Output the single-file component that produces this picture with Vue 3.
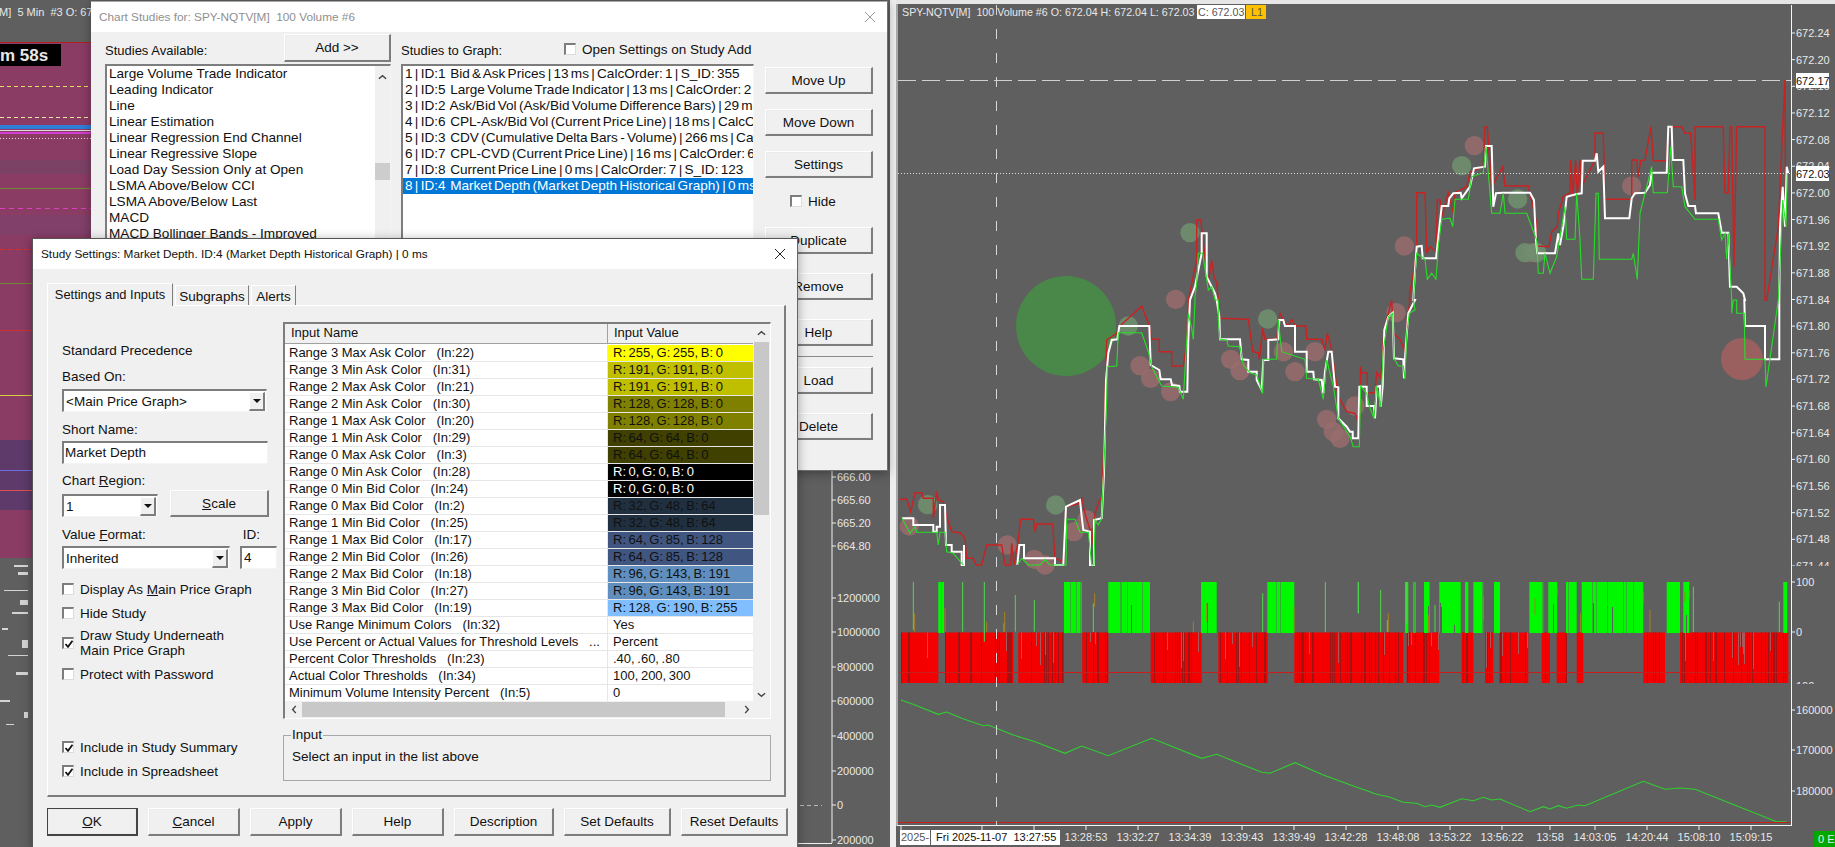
<script setup>
const map = (ox, oy, a) => { const r = []; for (let i = 0; i < a.length; i += 2) r.push([ox + a[i] / 3, oy + a[i + 1] / 3]); return r }
const Z7 = a => map(890, 0, a), Z8 = a => map(1350, 0, a), Z9 = a => map(890, 300, a), Z10 = a => map(1350, 300, a), Z11 = a => map(890, 560, a), Z12 = a => map(1350, 560, a)
const str = p => p.map(q => q[0].toFixed(1) + ',' + q[1].toFixed(1)).join(' ')

const white = [
  ...Z9([36,655,70,655,70,675,130,675,130,695,140,695,140,680,150,680,150,615,165,615,168,735,185,735,185,755,215,755,215,795,222,795,222,735]),
]
const white2 = [
  ...Z9([382,795,388,735,402,735,402,775,495,775,495,795,520,795,528,620,570,600,575,650,580,690,600,695,600,795,612,795,612,660,635,655,642,520,648,240,655,160,665,120,682,118,688,78,778,78,782,195,808,210,812,238,842,238,846,255,868,258,870,275,892,275,895,120,900,0]),
  ...Z7([915,860,935,760,935,700,950,700,950,830,965,860,975,880,980,900]),
  ...Z9([980,0,988,50,990,118,1050,118,1055,178,1075,180,1075,215,1100,215,1100,240,1115,270,1120,180,1135,180,1135,120,1165,118,1168,60,1180,60,1185,78,1215,78,1215,155,1250,155,1250,215,1270,215,1272,238,1295,240,1300,280,1305,215,1315,155,1325,155,1335,260,1345,262,1345,355,1370,380,1380,395]),
  ...Z10([0,395,8,395,8,415,25,415,28,260,50,260,50,318,72,318,75,355,80,260,90,258,92,320,98,258,103,90,115,50,128,38,132,175,160,178,162,235,166,160,175,40,195,0]),
  ...Z8([190,900,195,810,200,740,215,738,218,775,258,775,262,740,275,618,295,618,298,595,310,580,332,578,335,595,360,560,372,505,405,500,408,438,425,438,430,620,438,580,458,578,540,578,552,600,558,720,562,760,615,760,625,700,630,735,640,680,650,590,680,582,695,580,698,482,735,482,740,460,745,515,760,500,765,655,838,655,845,595,855,580,885,578,900,555,905,518,950,518,955,380,965,380,968,480,1000,480,1005,580,1015,618,1035,618,1038,640,1105,640,1115,698,1135,698,1140,860,1160,860,1180,880,1185,900]),
  ...Z10([1183,0,1185,78,1245,78,1245,178,1288,178,1288,0]),
  ...Z8([1288,900,1290,680,1298,560,1305,680,1310,500,1315,520]),
]
const red = [
  ...Z9([30,598,50,598,62,635,75,578,95,578,100,595,130,595,130,655,140,575,145,600,160,605,170,650,185,695,210,698,225,715,230,775,250,775,258,795,275,795,290,735,335,735,345,795,362,795,365,730,372,795,385,720,392,658,430,658,435,695,440,672,488,672,495,775,520,785,528,620,565,612,575,595,585,640,600,690,605,735,615,640,625,610,635,590,640,480,645,300,650,120,680,100,690,78,755,18,778,78,785,118,808,118,808,155,845,155,845,198,880,198,890,130,895,0]),
  ...Z7([895,900,920,780,920,660,932,660,945,770,955,850,965,780,972,830,980,850,985,900]),
  ...Z9([978,0,985,25,990,55,1075,58,1088,155,1105,158,1108,178,1118,85,1125,118,1160,118,1170,40,1185,70,1195,78,1205,58,1215,78,1248,78,1250,118,1295,118,1305,150,1312,100,1325,150,1345,290,1370,335,1395,340,1408,375,1412,200,1415,218,1432,218]),
  ...Z10([52,218,52,278,75,278,80,218,92,235,102,90,125,0]),
  ...Z10([130,100,150,118,165,155,172,60,180,0]),
  ...Z8([178,900,180,875,200,760,200,578,225,578,230,760,240,740,258,755,262,600,270,600,275,650,295,578,310,640,315,578,350,560,360,518,400,498,405,380,412,380,425,560,458,500,465,558,535,558,558,660,562,738,597,740,605,695,622,680,625,640,640,590,660,578,662,480,668,590,677,480,682,590,690,480,695,560,735,480,735,400,760,400,765,598,845,598,845,480,860,480,865,530,872,482,885,480,903,380,910,482,950,482,955,380,995,380,1005,400,1022,400,1035,600,1035,380,1120,380,1122,480,1125,578,1135,578,1140,380,1145,380,1152,800,1160,380,1245,380,1245,900,1250,900,1285,680,1298,380,1305,240,1307,680]),
]
const green = [
  ...Z9([36,655,60,700,75,680,80,697,140,697,145,735,150,697,165,697,170,755,190,760,220,795]),
]
const green2 = [
  ...Z9([382,795,395,775,415,795,450,795,465,778,480,795,528,795,530,658,555,658,570,697,595,697,605,795,612,795,615,660,625,675,635,655,650,300,652,200,680,198,685,98,755,98,775,155,785,200,815,258,865,262,880,298,890,120,895,40,905,85,910,118,915,0]),
  ...Z7([915,890,920,850,925,760,938,760,955,870,965,860,975,900]),
  ...Z9([985,0,985,60,990,118,1010,120,1015,138,1050,140,1060,195,1080,218,1100,225,1118,280,1120,178,1160,178,1165,60,1175,155,1245,178,1250,235,1285,238,1300,298,1310,180,1330,258,1345,355,1380,410,1390,440,1408,440,1412,258,1430,280,1438,320]),
  ...Z10([58,318,72,355,80,258,92,320,100,150,115,50,128,40,132,175,145,198,160,198,165,238,170,100,178,40,195,30]),
  ...Z8([190,900,200,760,225,778,232,838,245,820,258,838,265,740,275,658,300,655,308,680,315,598,355,598,365,530,400,518,408,438,425,640,450,640,460,580,465,640,530,640,560,720,565,820,580,820,585,760,600,820,620,770,645,620,650,718,675,718,680,580,690,718,695,838,730,838,738,580,745,580,748,778,845,778,850,760,862,838,870,640,905,500,910,578,952,578,962,440,970,560,995,560,1005,620,1035,658,1105,658,1115,720,1125,700,1130,778,1135,700,1145,900]),
  ...Z10([1145,0,1145,40,1150,0,1160,0,1160,40,1183,40,1185,178,1245,178,1248,260,1285,0]),
  ...Z8([1285,900,1295,680,1298,600,1308,680,1312,520]),
]
const priceLines = [
  { c: '#c92222', w: 1.4, p: str(red) },
  { c: '#ffffff', w: 2, p: str(white) },
  { c: '#ffffff', w: 2, p: str(white2) },
  { c: '#26e026', w: 1.1, p: str(green) },
  { c: '#26e026', w: 1.1, p: str(green2) },
]
const redDots = [
  ...Z9([58,678,352,735,433,778,465,795,552,695,590,660,750,197,782,235,842,275,1022,178,1050,212,1180,155,1215,215,1275,155,1310,358,1330,395,1350,415,1395,318]),
  ...Z7([857,898]),
  ...Z8([373,437,845,558,163,738,548,758]),
  ...Z10([138,38]),
]
const greenDots = [
  ...Z9([113,614,497,615,715,78,1133,57]),
  ...Z7([900,698]),
  ...Z8([335,497,503,597,525,758,560,758]),
]

let seed = 4711
const rnd = () => (seed = (seed * 16807) % 2147483647) / 2147483647
const zones = (arr, ox) => arr.map(z => [ox + z[0] / 3, ox + z[1] / 3])
const redZones = [
  ...zones([[33,145],[165,370],[385,522],[577,655],[782,935],[985,1133],[1213,1440]], 890),
  ...zones([[60,160],[170,225],[225,268],[335,370],[405,430],[448,535],[575,600],[620,650],[680,700],[880,945],[990,1285],[1285,1315]], 1350),
]
const greenZones = [
  ...zones([[145,162],[522,575],[655,780],[933,980],[1132,1213]], 890),
  ...zones([[165,175],[190,197],[222,238],[268,332],[345,355],[370,400],[432,450],[538,580],[595,622],[648,680],[695,880],[950,990],[1000,1018],[1300,1312]], 1350),
]
let rDark = '', rGap = '', rFill = ''
for (const [a, b] of redZones) {
  rFill += `M${a.toFixed(1)} 632.5H${b.toFixed(1)}V683H${a.toFixed(1)}Z`
  for (let x = Math.ceil(a); x < b; x++) {
    const r = rnd()
    if (r < 0.2) rDark += `M${x + 0.5} 632.5V683`
    else if (r < 0.25) rGap += `M${x + 0.5} 632.5V${(640 + rnd() * 30).toFixed(0)}`
  }
}
let gDark = '', gGap = '', gFill = ''
for (const [a, b] of greenZones) {
  gFill += `M${a.toFixed(1)} 582H${b.toFixed(1)}V633H${a.toFixed(1)}Z`
  for (let x = Math.ceil(a); x < b; x++) {
    const r = rnd()
    if (r < 0.1) gDark += `M${x + 0.5} 582V633`
    else if (r < 0.14) gGap += `M${x + 0.5} 633V${(600 + rnd() * 28).toFixed(0)}`
  }
}
const strayGreen = [
  ...[[70,66,210],[218,66,215],[283,66,245],[376,105,215],[433,120,215],[342,190,215],[610,130,216],[1118,100,216],[1306,66,216],[1405,66,160]].map(s => [890 + s[0] / 3, 560 + s[1] / 3, 560 + s[2] / 3]),
  ...[[25,66,160],[92,90,216],[112,180,216],[170,66,190],[255,135,216],[1030,80,216],[1288,125,216]].map(s => [1350 + s[0] / 3, 560 + s[1] / 3, 560 + s[2] / 3]),
]
const strayRed = [
  ...[[74,160,216],[165,145,216],[290,185,216],[344,155,216],[614,100,140],[910,185,216],[950,130,185],[1212,140,216]].map(s => [890 + s[0] / 3, 560 + s[1] / 3, 560 + s[2] / 3]),
  ...[[115,160,216],[235,165,216],[400,110,180],[555,115,165],[622,85,105],[692,160,216],[880,95,130],[900,150,216],[1005,95,125],[1018,90,115]].map(s => [1350 + s[0] / 3, 560 + s[1] / 3, 560 + s[2] / 3]),
]
const cvd = str([
  ...Z11([33,420,75,435,145,463,170,456,215,475,280,497,295,495,370,525,435,545,525,580,575,558,655,587,785,535,935,595,980,583,1115,637,1140,640,1215,608,1300,645,1400,682,1440,695]),
  ...Z12([70,700,90,705,115,710,160,727,200,730,225,740,245,735,270,742,335,716,370,722,400,712,425,720,450,717,540,755,580,740,600,747,625,737,650,745,685,735,705,737,880,664,945,688,990,684,1035,688,1280,785,1310,785]),
])

const priceLabels = ['672.24','672.20','672.16','672.12','672.08','672.04','672.00','671.96','671.92','671.88','671.84','671.80','671.76','671.72','671.68','671.64','671.60','671.56','671.52','671.48','671.44']
  .map((t, i) => ({ t, y: 33 + i * 26.65 }))
const otherLabels = [
  { t: '100', y: 582 }, { t: '0', y: 632 }, { t: '100', y: 686 },
  { t: '160000', y: 710 }, { t: '170000', y: 750 }, { t: '180000', y: 791 },
]
const times = [[1086,'13:28:53'],[1138,'13:32:27'],[1190,'13:34:39'],[1242,'13:39:43'],[1294,'13:39:49'],[1346,'13:42:28'],[1398,'13:48:08'],[1450,'13:53:22'],[1502,'13:56:22'],[1550,'13:58'],[1595,'14:03:05'],[1647,'14:20:44'],[1699,'15:08:10'],[1751,'15:09:15']]
const timeTicks = [901, 982, 1034, 1086, 1138, 1190, 1242, 1294, 1346, 1398, 1450, 1502, 1550, 1595, 1647, 1699, 1751]

const bgLabels = [['666.00',477],['665.60',500],['665.20',523],['664.80',546],['1200000',598],['1000000',632],['800000',667],['600000',701],['400000',736],['200000',771],['0',805],['200000',840]]
const stripMarks = [[14,565,14,2],[18,572,10,3],[4,590,24,1],[20,600,8,5],[12,612,16,2],[2,628,6,2],[22,640,6,8],[8,655,20,1],[16,672,12,3],[0,700,10,2],[24,712,4,6],[6,724,8,1]]

const studiesTitle = 'Chart Studies for: SPY-NQTV[M]  100 Volume #6'
const chartHeader = 'SPY-NQTV[M]  100 Volume #6 O: 672.04 H: 672.04 L: 672.03'
const backHeader = '[M]  5 Min  #3 O: 672.03'
const cursorDate = 'Fri 2025-11-07  13:27:55'

const availableStudies = ['Large Volume Trade Indicator','Leading Indicator','Line','Linear Estimation','Linear Regression End Channel','Linear Regressive Slope','Load Day Session Only at Open','LSMA Above/Below CCI','LSMA Above/Below Last','MACD','MACD Bollinger Bands - Improved']
const graphStudies = [
  '1 | ID:1  Bid & Ask Prices | 13 ms | CalcOrder: 1 | S_ID: 355',
  '2 | ID:5  Large Volume Trade Indicator | 13 ms | CalcOrder: 2 | S_ID: 310',
  '3 | ID:2  Ask/Bid Vol (Ask/Bid Volume Difference Bars) | 29 ms | CalcOrder: 3',
  '4 | ID:6  CPL-Ask/Bid Vol (Current Price Line) | 18 ms | CalcOrder: 4 | S_ID: 123',
  '5 | ID:3  CDV (Cumulative Delta Bars - Volume) | 266 ms | CalcOrder: 5',
  '6 | ID:7  CPL-CVD (Current Price Line) | 16 ms | CalcOrder: 6 | S_ID: 123',
  '7 | ID:8  Current Price Line | 0 ms | CalcOrder: 7 | S_ID: 123',
  '8 | ID:4  Market Depth (Market Depth Historical Graph) | 0 ms | CalcOrder: 8',
]
const inputRows = [
  ['Range 3 Max Ask Color   (In:22)', 255, 255, 0],
  ['Range 3 Min Ask Color   (In:31)', 191, 191, 0],
  ['Range 2 Max Ask Color   (In:21)', 191, 191, 0],
  ['Range 2 Min Ask Color   (In:30)', 128, 128, 0],
  ['Range 1 Max Ask Color   (In:20)', 128, 128, 0],
  ['Range 1 Min Ask Color   (In:29)', 64, 64, 0],
  ['Range 0 Max Ask Color   (In:3)', 64, 64, 0],
  ['Range 0 Min Ask Color   (In:28)', 0, 0, 0],
  ['Range 0 Min Bid Color   (In:24)', 0, 0, 0],
  ['Range 0 Max Bid Color   (In:2)', 32, 48, 64],
  ['Range 1 Min Bid Color   (In:25)', 32, 48, 64],
  ['Range 1 Max Bid Color   (In:17)', 64, 85, 128],
  ['Range 2 Min Bid Color   (In:26)', 64, 85, 128],
  ['Range 2 Max Bid Color   (In:18)', 96, 143, 191],
  ['Range 3 Min Bid Color   (In:27)', 96, 143, 191],
  ['Range 3 Max Bid Color   (In:19)', 128, 190, 255],
].map(r => ({
  name: r[0],
  value: `R: ${r[1]}, G: ${r[2]}, B: ${r[3]}`,
  bg: `rgb(${r[1]},${r[2]},${r[3]})`,
  fg: r[1] === 0 && r[2] === 0 ? '#fff' : '#111',
}))
const textRows = [
  ['Use Range Minimum Colors   (In:32)', 'Yes'],
  ['Use Percent or Actual Values for Threshold Levels   ...', 'Percent'],
  ['Percent Color Thresholds   (In:23)', '.40, .60, .80'],
  ['Actual Color Thresholds   (In:34)', '100, 200, 300'],
  ['Minimum Volume Intensity Percent   (In:5)', '0'],
]
</script>

<template>
  <div class="desktop">
    <!-- Chart behind the dialogs -->
    <svg class="back-chart" viewBox="0 0 895 847" width="895" height="847">
      <rect x="0" y="0" width="895" height="847" fill="#5f5f5f" />
      <rect x="0" y="43" width="91" height="515" fill="#8a3c64" />
      <rect x="0" y="160" width="91" height="14" fill="#7c4266" />
      <rect x="0" y="215" width="91" height="20" fill="#80406a" />
      <rect x="0" y="440" width="32" height="70" fill="#5d3a6a" />
      <rect v-for="(m, i) in stripMarks" :key="i" :x="m[0]" :y="m[1]" :width="m[2]" :height="m[3]" fill="#d4d4d4" />
      <line x1="0" y1="42.5" x2="91" y2="42.5" stroke="#b02020" />
      <line x1="0" y1="86.5" x2="91" y2="86.5" stroke="#dde060" stroke-dasharray="4 3" />
      <line x1="0" y1="117.5" x2="91" y2="117.5" stroke="#e8e8a0" stroke-dasharray="4 3" />
      <rect x="0" y="125" width="91" height="4" fill="#2f7ed8" />
      <line x1="0" y1="130.5" x2="91" y2="130.5" stroke="#dddddd" />
      <rect x="0" y="132" width="91" height="2" fill="#d23fd2" />
      <line x1="0" y1="138.5" x2="91" y2="138.5" stroke="#dddddd" stroke-dasharray="1 2" />
      <line x1="0" y1="188.5" x2="91" y2="188.5" stroke="#6f8a33" />
      <line x1="0" y1="208.5" x2="91" y2="208.5" stroke="#dc3fc0" stroke-dasharray="5 4" />
      <line x1="0" y1="249.5" x2="32" y2="249.5" stroke="#d03030" stroke-dasharray="5 3" />
      <line x1="0" y1="283.5" x2="32" y2="283.5" stroke="#6f8a33" />
      <line x1="0" y1="330.5" x2="32" y2="330.5" stroke="#d03030" />
      <line x1="0" y1="395.5" x2="32" y2="395.5" stroke="#d8d040" />
      <line x1="0" y1="470.5" x2="32" y2="470.5" stroke="#6e6ee0" />
      <line x1="0" y1="490.5" x2="32" y2="490.5" stroke="#e05050" />
      <rect class="time-box" x="0" y="44" width="61" height="22" fill="#000" />
      <text class="big" x="0" y="61">m 58s</text>
      <text class="lbl" x="-4" y="16">{{ backHeader }}</text>
      <line x1="832" y1="470" x2="832" y2="843" stroke="#f0f0f0" />
      <line x1="798" y1="843.5" x2="832" y2="843.5" stroke="#f0f0f0" />
      <line x1="800" y1="805.5" x2="822" y2="805.5" stroke="#bbb" stroke-dasharray="4 3" />
      <g v-for="b in bgLabels" :key="b[0] + b[1]">
        <line x1="832" :y1="b[1]" x2="836" :y2="b[1]" stroke="#f0f0f0" />
        <text class="lbl" x="837" :y="b[1] + 4">{{ b[0] }}</text>
      </g>
    </svg>

    <!-- Chart on the right -->
    <section class="chart">
      <svg viewBox="890 0 945 847" width="945" height="847">
        <rect x="890" y="0" width="945" height="847" fill="#5f5f5f" />
        <rect x="890" y="0" width="945" height="4" fill="#e6e6e6" />
        <rect x="890" y="0" width="6" height="847" fill="#eeeeee" />
        <line x1="897" y1="4" x2="897" y2="826" stroke="#f5f5f5" />
        <g v-for="(d, i) in redDots" :key="'r' + i"><circle :cx="d[0]" :cy="d[1]" r="9.7" fill="#976c6c" opacity=".88" /></g>
        <g v-for="(d, i) in greenDots" :key="'g' + i"><circle :cx="d[0]" :cy="d[1]" r="9.7" fill="#6f8f6f" opacity=".9" /></g>
        <circle cx="1066" cy="326" r="50" fill="#4a884a" />
        <circle cx="1742" cy="359" r="21" fill="#9a6060" />
        <polyline v-for="(l, i) in priceLines" :key="i" :points="l.p" fill="none" :stroke="l.c" :stroke-width="l.w" />
        <path :d="rFill" fill="#f40000" />
        <path :d="rGap" stroke="#a85a5a" fill="none" />
        <path :d="rDark" stroke="#9c1414" fill="none" />
        <path :d="gFill" fill="#00f800" />
        <path :d="gGap" stroke="#5f5f5f" fill="none" />
        <path :d="gDark" stroke="#33b033" fill="none" />
        <line v-for="(s, i) in strayGreen" :key="'sg' + i" :x1="s[0]" :y1="s[1]" :x2="s[0]" :y2="s[2]" stroke="#4ed84e" />
        <line v-for="(s, i) in strayRed" :key="'sr' + i" :x1="s[0]" :y1="s[1]" :x2="s[0]" :y2="s[2]" stroke="#a88020" />
        <line x1="899" y1="672.5" x2="1790" y2="672.5" stroke="#c81e1e" />
        <polyline :points="cvd" fill="none" stroke="#2fd02f" stroke-width="1.1" />
        <line x1="898" y1="822.5" x2="1790" y2="822.5" stroke="#c81e1e" />
        <line x1="996.5" y1="5" x2="996.5" y2="826" stroke="#d8d8d8" stroke-dasharray="10 14" />
        <line x1="898" y1="80.5" x2="1791" y2="80.5" stroke="#d0d0d0" stroke-dasharray="18 6" />
        <line x1="898" y1="173.5" x2="1791" y2="173.5" stroke="#dddddd" stroke-dasharray="1 2" />

        <line x1="1791.5" y1="5" x2="1791.5" y2="826" stroke="#f5f5f5" />
        <line x1="897" y1="825.5" x2="1791" y2="825.5" stroke="#f5f5f5" />
        <g v-for="l in priceLabels" :key="l.t">
          <line x1="1791" :y1="l.y" x2="1795" :y2="l.y" stroke="#f0f0f0" />
          <text class="lbl" x="1796" :y="l.y + 4">{{ l.t }}</text>
        </g>
        <g v-for="l in otherLabels" :key="l.t + l.y">
          <line x1="1791" :y1="l.y" x2="1795" :y2="l.y" stroke="#f0f0f0" />
          <text class="lbl" x="1796" :y="l.y + 4">{{ l.t }}</text>
        </g>
        <rect x="1792" y="566" width="43" height="9" fill="#5f5f5f" />
        <rect x="1792" y="684" width="43" height="12" fill="#5f5f5f" />
        <rect x="1796" y="73" width="33" height="15" fill="#fff" />
        <text class="lbl dark" x="1796" y="85">672.17</text>
        <rect x="1796" y="166" width="33" height="15" fill="#fff" />
        <text class="lbl dark" x="1796" y="178">672.03</text>

        <text class="lbl head-text" x="902" y="16">{{ chartHeader }}</text>
        <rect x="1197" y="5" width="48" height="14" fill="#fff" />
        <text class="lbl gray head-text" x="1198" y="16">C: 672.03</text>
        <rect x="1246" y="5" width="20" height="14" fill="#ffc000" />
        <text class="lbl gray head-text" x="1251" y="16">L1</text>

        <line v-for="t in timeTicks" :key="t" :x1="t" y1="826" :x2="t" y2="830" stroke="#f0f0f0" />
        <rect x="900" y="830" width="30" height="15" fill="#fff" />
        <text class="lbl gray" x="901" y="841">2025-</text>
        <rect x="931" y="830" width="129" height="15" fill="#fff" />
        <text class="lbl dark" x="936" y="841">{{ cursorDate }}</text>
        <text v-for="t in times" :key="t[1]" class="lbl" :x="t[0]" y="841" text-anchor="middle">{{ t[1] }}</text>
        <rect x="1814" y="831" width="21" height="16" fill="#00a800" />
        <text class="lbl" x="1818" y="843">0 E</text>
      </svg>
    </section>

    <!-- Chart Studies dialog -->
    <section class="dialog studies">
      <header class="title inactive">
        <span>{{ studiesTitle }}</span>
        <svg class="close" viewBox="0 0 12 12" width="12" height="12"><path d="M1 1L11 11M11 1L1 11" stroke="#9a9a9a" fill="none" /></svg>
      </header>
      <div class="studies-body">
        <div class="col-avail">
          <div class="head">
            <span>Studies Available:</span>
            <button class="btn add">Add &gt;&gt;</button>
          </div>
          <div class="list sunken">
            <div class="list-rows">
              <div v-for="s in availableStudies" :key="s" class="row">{{ s }}</div>
            </div>
            <div class="vbar">
              <svg viewBox="0 0 10 6" width="9" height="6" class="chev"><path d="M1 5L5 1.5L9 5" stroke="#444" stroke-width="1.6" fill="none" /></svg>
              <div class="vthumb"></div>
            </div>
          </div>
        </div>
        <div class="col-graph">
          <div class="head">
            <span class="graph-label">Studies to Graph:</span>
            <label class="check"><i class="box"></i><span>Open Settings on Study Add</span></label>
          </div>
          <div class="list sunken">
            <div class="list-rows graph-rows">
              <div v-for="(s, i) in graphStudies" :key="s" class="row" :class="{ sel: i === 7 }">{{ s }}</div>
            </div>
          </div>
        </div>
        <div class="col-actions">
          <button class="btn act">Move Up</button>
          <button class="btn act m15">Move Down</button>
          <button class="btn act m15">Settings</button>
          <label class="check hide"><i class="box"></i><span>Hide</span></label>
          <button class="btn act m17">Duplicate</button>
          <button class="btn act m19">Remove</button>
          <button class="btn act m19">Help</button>
          <div class="sep"></div>
          <button class="btn act m10">Load</button>
          <button class="btn act m19">Delete</button>
        </div>
      </div>
    </section>

    <!-- Study Settings dialog -->
    <section class="dialog settings">
      <header class="title">
        <span>Study Settings: Market Depth. ID:4 (Market Depth Historical Graph) | 0 ms</span>
        <svg class="close" viewBox="0 0 12 12" width="12" height="12"><path d="M1 1L11 11M11 1L1 11" stroke="#222" fill="none" /></svg>
      </header>
      <div class="settings-body">
        <nav class="tabs">
          <div class="tab active">Settings and Inputs</div>
          <div class="tab t-sub">Subgraphs</div>
          <div class="tab t-alert">Alerts</div>
        </nav>
        <div class="pane">
          <div class="form">
            <div class="lab">Standard Precedence</div>
            <div class="lab m10">Based On:</div>
            <div class="combo sunken m4"><span>&lt;Main Price Graph&gt;</span><i class="arrow"></i></div>
            <div class="lab m10">Short Name:</div>
            <div class="field sunken m3">Market Depth</div>
            <div class="lab m9">Chart <u>R</u>egion:</div>
            <div class="region">
              <div class="combo sunken narrow"><span>1</span><i class="arrow"></i></div>
              <button class="btn scale"><u>S</u>cale</button>
            </div>
            <div class="lab-row m10"><span>Value <u>F</u>ormat:</span><span>ID:</span></div>
            <div class="format m3">
              <div class="combo sunken wide"><span>Inherited</span><i class="arrow"></i></div>
              <div class="field sunken id">4</div>
            </div>
            <label class="check chk m12"><i class="box"></i><span>Display As <u>M</u>ain Price Graph</span></label>
            <label class="check chk m8"><i class="box"></i><span>Hide Study</span></label>
            <label class="check chk two m6"><i class="box on"><svg viewBox="0 0 10 10" width="10" height="10"><path d="M1.5 5L4 7.8L8.5 1.8" stroke="#111" stroke-width="1.8" fill="none" /></svg></i><span>Draw Study Underneath<br />Main Price Graph</span></label>
            <label class="check chk m7"><i class="box"></i><span>Protect with Password</span></label>
            <label class="check chk m57"><i class="box on"><svg viewBox="0 0 10 10" width="10" height="10"><path d="M1.5 5L4 7.8L8.5 1.8" stroke="#111" stroke-width="1.8" fill="none" /></svg></i><span>Include in Study Summary</span></label>
            <label class="check chk m8"><i class="box on"><svg viewBox="0 0 10 10" width="10" height="10"><path d="M1.5 5L4 7.8L8.5 1.8" stroke="#111" stroke-width="1.8" fill="none" /></svg></i><span>Include in Spreadsheet</span></label>
          </div>
          <div class="inputs">
            <div class="table">
              <div class="table-main">
                <div class="thead"><span class="th name">Input Name</span><span class="th value">Input Value</span></div>
                <div class="tr" v-for="r in inputRows" :key="r.name">
                  <span class="td name">{{ r.name }}</span>
                  <span class="td value" :style="{ background: r.bg, color: r.fg }">{{ r.value }}</span>
                </div>
                <div class="tr" v-for="r in textRows" :key="r[0]">
                  <span class="td name">{{ r[0] }}</span>
                  <span class="td value">{{ r[1] }}</span>
                </div>
              </div>
              <div class="tbar-v">
                <svg viewBox="0 0 10 6" width="9" height="6"><path d="M1 5L5 1.5L9 5" stroke="#444" stroke-width="1.6" fill="none" /></svg>
                <div class="tthumb-v"></div>
                <svg viewBox="0 0 10 6" width="9" height="6"><path d="M1 1L5 4.5L9 1" stroke="#444" stroke-width="1.6" fill="none" /></svg>
              </div>
              <div class="tbar-h">
                <svg viewBox="0 0 6 10" width="6" height="9"><path d="M5 1L1.5 5L5 9" stroke="#444" stroke-width="1.6" fill="none" /></svg>
                <div class="tthumb-h"></div>
                <svg viewBox="0 0 6 10" width="6" height="9"><path d="M1 1L4.5 5L1 9" stroke="#444" stroke-width="1.6" fill="none" /></svg>
              </div>
              <div class="tcorner"></div>
            </div>
            <div class="group">
              <span class="legend">Input</span>
              Select an input in the list above
            </div>
          </div>
        </div>
        <footer class="footer">
          <button class="btn foot default w91"><u>O</u>K</button>
          <button class="btn foot w92"><u>C</u>ancel</button>
          <button class="btn foot w92">Apply</button>
          <button class="btn foot w92">Help</button>
          <button class="btn foot w99">Description</button>
          <button class="btn foot w107">Set Defaults</button>
          <button class="btn foot w107">Reset Defaults</button>
        </footer>
      </div>
    </section>
  </div>
</template>

<style>
html, body { margin: 0; padding: 0; background: #5f5f5f; }
</style>

<style scoped>
.desktop {
  position: relative;
  width: 1835px;
  height: 847px;
  overflow: hidden;
  background: #5f5f5f;
  font: 13px "Liberation Sans", Arial, sans-serif;
  color: #111;
}
.back-chart { position: absolute; left: 0; top: 0; }
.chart { position: absolute; left: 890px; top: 0; width: 945px; height: 847px; }
.chart svg, .back-chart { display: block; }
.lbl { font: 11px "Liberation Sans", Arial, sans-serif; fill: #e8e8e8; white-space: pre; }
.lbl.dark { fill: #111; }
.lbl.gray { fill: #555; }
.lbl.head-text { font-size: 10.7px; }
.big { font: bold 17px "Liberation Sans", Arial, sans-serif; fill: #e8e8e8; }

.dialog {
  position: absolute;
  background: #f0f0f0;
  box-sizing: border-box;
  box-shadow: 0 2px 10px rgba(0, 0, 0, .35);
}
.studies {
  left: 91px; top: 1px; width: 797px; height: 470px;
  border-top: 1px solid #a8a8a8;
  border-right: 1px solid #6f6f6f;
  border-bottom: 1px solid #6f6f6f;
}
.settings {
  left: 32px; top: 238px; width: 766px; height: 609px;
  border-left: 1px solid #555;
  border-top: 1px solid #555;
  border-right: 1px solid #666;
}
.title {
  height: 30px;
  background: #fff;
  display: flex;
  align-items: center;
  justify-content: space-between;
  padding: 0 9px 0 8px;
  white-space: pre;
  box-sizing: border-box;
  font-size: 11.8px;
}
.title.inactive { color: #8f8f8f; }
.close { flex: none; margin-right: 2px; }

.btn {
  font: inherit;
  color: #111;
  background: #f0f0f0;
  box-sizing: border-box;
  padding: 0;
  border-style: solid;
  border-width: 1px 2px 2px 1px;
  border-color: #fff #7d7d7d #7d7d7d #fff;
  box-shadow: inset 0 0 0 1px #ececec;
}
.sunken {
  box-sizing: border-box;
  border-style: solid;
  border-width: 2px 1px 1px 2px;
  border-color: #7d7d7d #f4f4f4 #f4f4f4 #7d7d7d;
  background: #fff;
}

.studies-body { display: flex; padding: 2px 0 0 14px; }
.col-avail { width: 286px; margin-right: 10px; flex: none; }
.col-graph { width: 353px; margin-right: 11px; flex: none; }
.col-actions { width: 108px; flex: none; margin-top: 33px; display: flex; flex-direction: column; }
.head { height: 30px; display: flex; align-items: center; justify-content: space-between; }
.head > span { padding-top: 2px; }
.col-graph .head { justify-content: flex-start; }
.graph-label { width: 163px; flex: none; }
.add { width: 107px; height: 28px; margin-bottom: 2px; font-size: 13.5px; }
.list { height: 210px; display: flex; overflow: hidden; }
.list-rows { flex: 1; min-width: 0; overflow: hidden; }
.graph-rows { word-spacing: -1.5px; }
.row { height: 16px; line-height: 16px; padding-left: 2px; white-space: pre; font-size: 13.6px; overflow: hidden; }
.row.sel { background: #0078d7; color: #fff; }
.vbar { width: 15px; flex: none; background: #f0f0f0; position: relative; display: flex; flex-direction: column; align-items: center; padding-top: 8px; box-sizing: border-box; }
.vthumb { width: 15px; height: 17px; background: #cdcdcd; margin-top: 83px; }
.act { height: 27px; width: 108px; flex: none; font-size: 13.5px; }
.m3 { margin-top: 3px; }
.m4 { margin-top: 4px; }
.m6 { margin-top: 6px; }
.m7 { margin-top: 7px; }
.m8 { margin-top: 8px; }
.m9 { margin-top: 9px; }
.m10 { margin-top: 10px; }
.m12 { margin-top: 12px; }
.m15 { margin-top: 15px; }
.m17 { margin-top: 17px; }
.m19 { margin-top: 19px; }
.m57 { margin-top: 57px; }
.sep { height: 1px; background: #8a8a8a; margin-top: 10px; flex: none; }

.check { display: flex; align-items: center; gap: 6px; font-size: 13.5px; white-space: pre; }
.box {
  width: 12px; height: 12px; flex: none;
  box-sizing: border-box;
  background: #fff;
  border-style: solid;
  border-width: 2px 1px 1px 2px;
  border-color: #7d7d7d #dcdcdc #dcdcdc #7d7d7d;
  display: block;
  position: relative;
}
.box svg { position: absolute; left: 0; top: 0; }
.hide { height: 18px; margin-top: 14px; padding-left: 25px; }

.settings-body { padding: 14px 0 0 14px; }
.tabs { display: flex; align-items: flex-end; height: 22px; gap: 2px; padding-left: 0; }
.tab {
  height: 20px; line-height: 21px;
  box-sizing: border-box;
  font-size: 13.5px;
  text-align: center;
  border-style: solid;
  border-width: 1px 1px 0 1px;
  border-color: #fff #7d7d7d transparent #fff;
}
.tab.active { width: 126px; height: 23px; line-height: 21px; margin-bottom: -1px; position: relative; z-index: 1; background: #f0f0f0; font-size: 12.9px; }
.t-sub { width: 74px; }
.t-alert { width: 45px; }
.pane {
  width: 739px; height: 492px;
  box-sizing: border-box;
  display: flex;
  border-style: solid;
  border-width: 1px 2px 2px 1px;
  border-color: #fff #7d7d7d #7d7d7d #fff;
  padding: 0 0 0 14px;
}
.form { width: 220px; flex: none; padding-top: 37px; font-size: 13.5px; }
.lab { height: 16px; line-height: 16px; }
.lab-row { height: 16px; line-height: 16px; display: flex; justify-content: space-between; width: 198px; }
.combo {
  height: 23px; width: 205px;
  display: flex; align-items: center; justify-content: space-between;
  padding-left: 2px;
  overflow: hidden;
}
.combo.narrow { width: 96px; }
.combo.wide { width: 168px; flex: none; }
.arrow {
  width: 16px; height: 19px; flex: none;
  box-sizing: border-box;
  background: #f0f0f0;
  border-style: solid; border-width: 1px 2px 2px 1px;
  border-color: #fff #7d7d7d #7d7d7d #fff;
  position: relative;
  margin-right: 1px;
}
.arrow::after {
  content: "";
  position: absolute; left: 3px; top: 6px;
  border-style: solid;
  border-width: 4px 4px 0 4px;
  border-color: #111 transparent transparent transparent;
}
.field { height: 23px; width: 206px; line-height: 19px; padding-left: 1px; }
.field.id { width: 37px; padding-left: 2px; margin-left: 10px; flex: none; }
.region { display: flex; align-items: flex-end; justify-content: space-between; width: 207px; height: 27px; margin-top: 1px; }
.scale { width: 99px; height: 27px; margin-top: 0; }
.format { display: flex; }
.chk { height: 16px; gap: 6px; }
.chk.two { height: 32px; }

.inputs { width: 488px; margin-left: 1px; padding-top: 16px; flex: none; }
.table {
  width: 488px; height: 397px;
  box-sizing: border-box;
  display: grid;
  grid-template-columns: 1fr 17px;
  grid-template-rows: 1fr 17px;
  background: #f0f0f0;
  border-style: solid;
  border-width: 2px 1px 1px 2px;
  border-color: #7d7d7d #fff #fff #7d7d7d;
  overflow: hidden;
}
.table-main { background: #fff; overflow: hidden; min-height: 0; }
.thead { height: 20px; display: flex; background: #f0f0f0; margin-bottom: 1px; border-bottom: 1px solid #a0a0a0; box-sizing: border-box; font-size: 13px; }
.th { line-height: 18px; }
.th.name { width: 323px; padding-left: 6px; box-sizing: border-box; border-right: 1px solid #a0a0a0; }
.th.value { padding-left: 6px; }
.tr { height: 17px; display: flex; border-bottom: 1px solid #e6e6e6; box-sizing: border-box; }
.td { line-height: 16px; white-space: pre; font-size: 13px; box-sizing: border-box; overflow: hidden; }
.td.name { width: 323px; padding-left: 4px; border-right: 1px solid #e6e6e6; }
.td.value { flex: 1; padding-left: 5px; word-spacing: -1px; }
.tbar-v { background: #f0f0f0; display: flex; flex-direction: column; align-items: center; padding-top: 6px; box-sizing: border-box; }
.tthumb-v { width: 15px; height: 173px; background: #c8c8c8; margin-top: 6px; margin-bottom: 177px; }
.tbar-h { background: #f0f0f0; display: flex; align-items: center; padding-left: 6px; box-sizing: border-box; }
.tthumb-h { width: 423px; height: 15px; background: #c8c8c8; margin: 0 19px 0 5px; }
.tcorner { background: #f0f0f0; }
.group {
  position: relative;
  margin-top: 16px;
  width: 488px; height: 46px;
  box-sizing: border-box;
  border: 1px solid #a8a8a8;
  padding: 13px 0 0 8px;
  font-size: 13.5px;
}
.legend { position: absolute; left: 7px; top: -9px; background: #f0f0f0; padding: 0 1px; line-height: 16px; }

.footer { display: flex; margin-top: 11px; margin-left: 0; }
.foot { height: 28px; margin-right: 10px; flex: none; font-size: 13.5px; }
.w91 { width: 91px; }
.w92 { width: 92px; }
.w99 { width: 100px; }
.w107 { width: 107px; }
.foot.default { border-color: #444 #444 #444 #444; border-width: 1px 2px 2px 1px; }
</style>
